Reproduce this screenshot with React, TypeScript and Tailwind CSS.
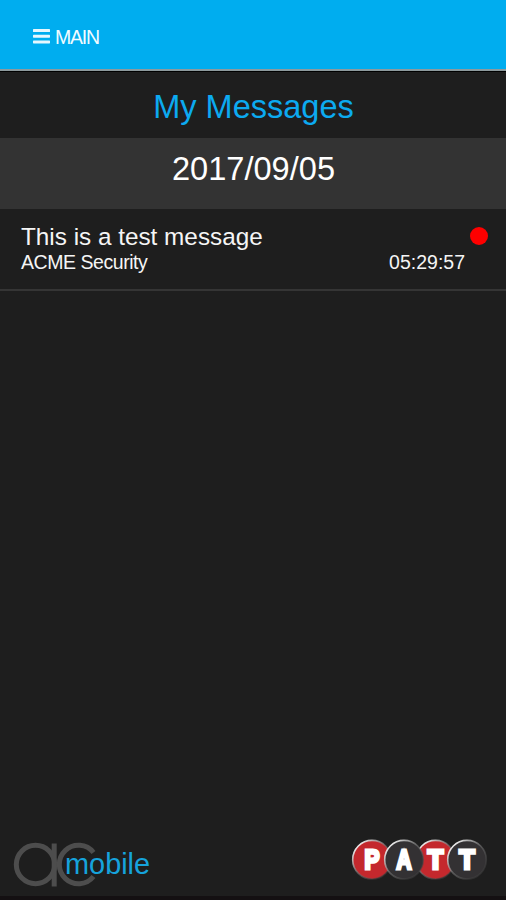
import React from 'react'

interface Message {
  title: string
  sender: string
  time: string
  unread: boolean
}

const messages: Message[] = [
  { title: 'This is a test message', sender: 'ACME Security', time: '05:29:57', unread: true },
]

// painted in this order, so the dark discs overlap the red ones
const badges = [
  { letter: 'P', x: 21, width: 15, fill: '#c4282d' },
  { letter: 'T', x: 84.5, width: 15.5, fill: '#c4282d' },
  { letter: 'A', x: 53, width: 15, fill: '#333133' },
  { letter: 'T', x: 116, width: 15.5, fill: '#333133' },
]

function Header() {
  return (
    <header className="flex h-[72px] items-center gap-[5px] border-b border-black bg-[#00adef] pl-[33px] shadow-[inset_0_-2px_0_#8d9a9d]">
      <svg className="mt-px h-[15px] w-[17px]" viewBox="0 0 17 15" fill="#e6f7fe">
        <rect y="0" width="17" height="3" rx="0.6" />
        <rect y="5.7" width="17" height="3" rx="0.6" />
        <rect y="11.4" width="17" height="3" rx="0.6" />
      </svg>
      <span className="mt-[2px] text-[19.5px] leading-6 tracking-[-1.2px] text-[#f2fbff]">MAIN</span>
    </header>
  )
}

function MessageRow({ message }: { message: Message }) {
  return (
    <li className="flex h-[82px] justify-between border-b-2 border-[#353535] pt-[14px] pr-[18px] pl-[21px]">
      <div>
        <p className="text-[24.3px] leading-7">{message.title}</p>
        <p className="-mt-px text-[19.5px] leading-6 tracking-[-0.45px]">{message.sender}</p>
      </div>
      <div className="flex flex-col items-end">
        <div className="flex h-[27px] items-start pt-[4px]">
          {message.unread && <span className="h-[18px] w-[18px] rounded-full bg-[#ff0000]" />}
        </div>
        <p className="pr-[23px] text-[19.5px] leading-6">{message.time}</p>
      </div>
    </li>
  )
}

function AcMobileLogo() {
  return (
    <svg className="h-[48px] w-[140px]" viewBox="0 0 140 48">
      <g fill="none" stroke="#4d4d4d" strokeWidth="5">
        <circle cx="22.5" cy="23.5" r="19.2" />
        <path d="M41.2 2.5v43" />
        <path d="M80.5 11.5A19.2 19.2 0 1 0 80.5 35.5" />
      </g>
      <text x="52" y="32.5" fontSize="28.9" fill="#16a3dc">
        mobile
      </text>
    </svg>
  )
}

function PattLogo() {
  return (
    <svg className="h-[42px] w-[138px]" viewBox="0 0 138 42">
      <defs>
        <linearGradient id="rim" x1="0" y1="0" x2="1" y2="1">
          <stop offset="0.1" stopColor="#ffffff" />
          <stop offset="0.5" stopColor="#777777" stopOpacity="0.6" />
          <stop offset="0.8" stopColor="#444444" stopOpacity="0.5" />
        </linearGradient>
      </defs>
      {badges.map((badge) => (
        <g key={badge.x}>
          <circle cx={badge.x} cy="20.7" r="19.3" fill={badge.fill} stroke="url(#rim)" strokeWidth="1.6" />
          <text
            x={badge.x - badge.width / 2}
            y="30"
            fontSize="28"
            fontWeight="700"
            textLength={badge.width}
            lengthAdjust="spacingAndGlyphs"
            fill="#ffffff"
            stroke="#ffffff"
            strokeWidth="3.2"
          >
            {badge.letter}
          </text>
        </g>
      ))}
    </svg>
  )
}

export default function App() {
  return (
    <div className="flex h-[900px] w-[506px] flex-col bg-[#1e1e1e] font-['Liberation_Sans',Arial,sans-serif] text-[#f5f5f5]">
      <Header />
      <h1 className="h-[66px] pt-[14px] pl-px text-center text-[32.5px] leading-[42px] text-[#0caaf0]">
        My Messages
      </h1>
      <h2 className="h-[71px] bg-[#333333] pt-[10px] pl-px text-center text-[32.6px] leading-[42px] text-white">
        2017/09/05
      </h2>
      <ul>
        {messages.map((message) => (
          <MessageRow key={message.time} message={message} />
        ))}
      </ul>
      <footer className="mt-auto flex items-start justify-between border-b-4 border-[#141012] pr-[17px] pb-[7px] pl-[13px]">
        <div className="pt-[2px]">
          <AcMobileLogo />
        </div>
        <PattLogo />
      </footer>
    </div>
  )
}
